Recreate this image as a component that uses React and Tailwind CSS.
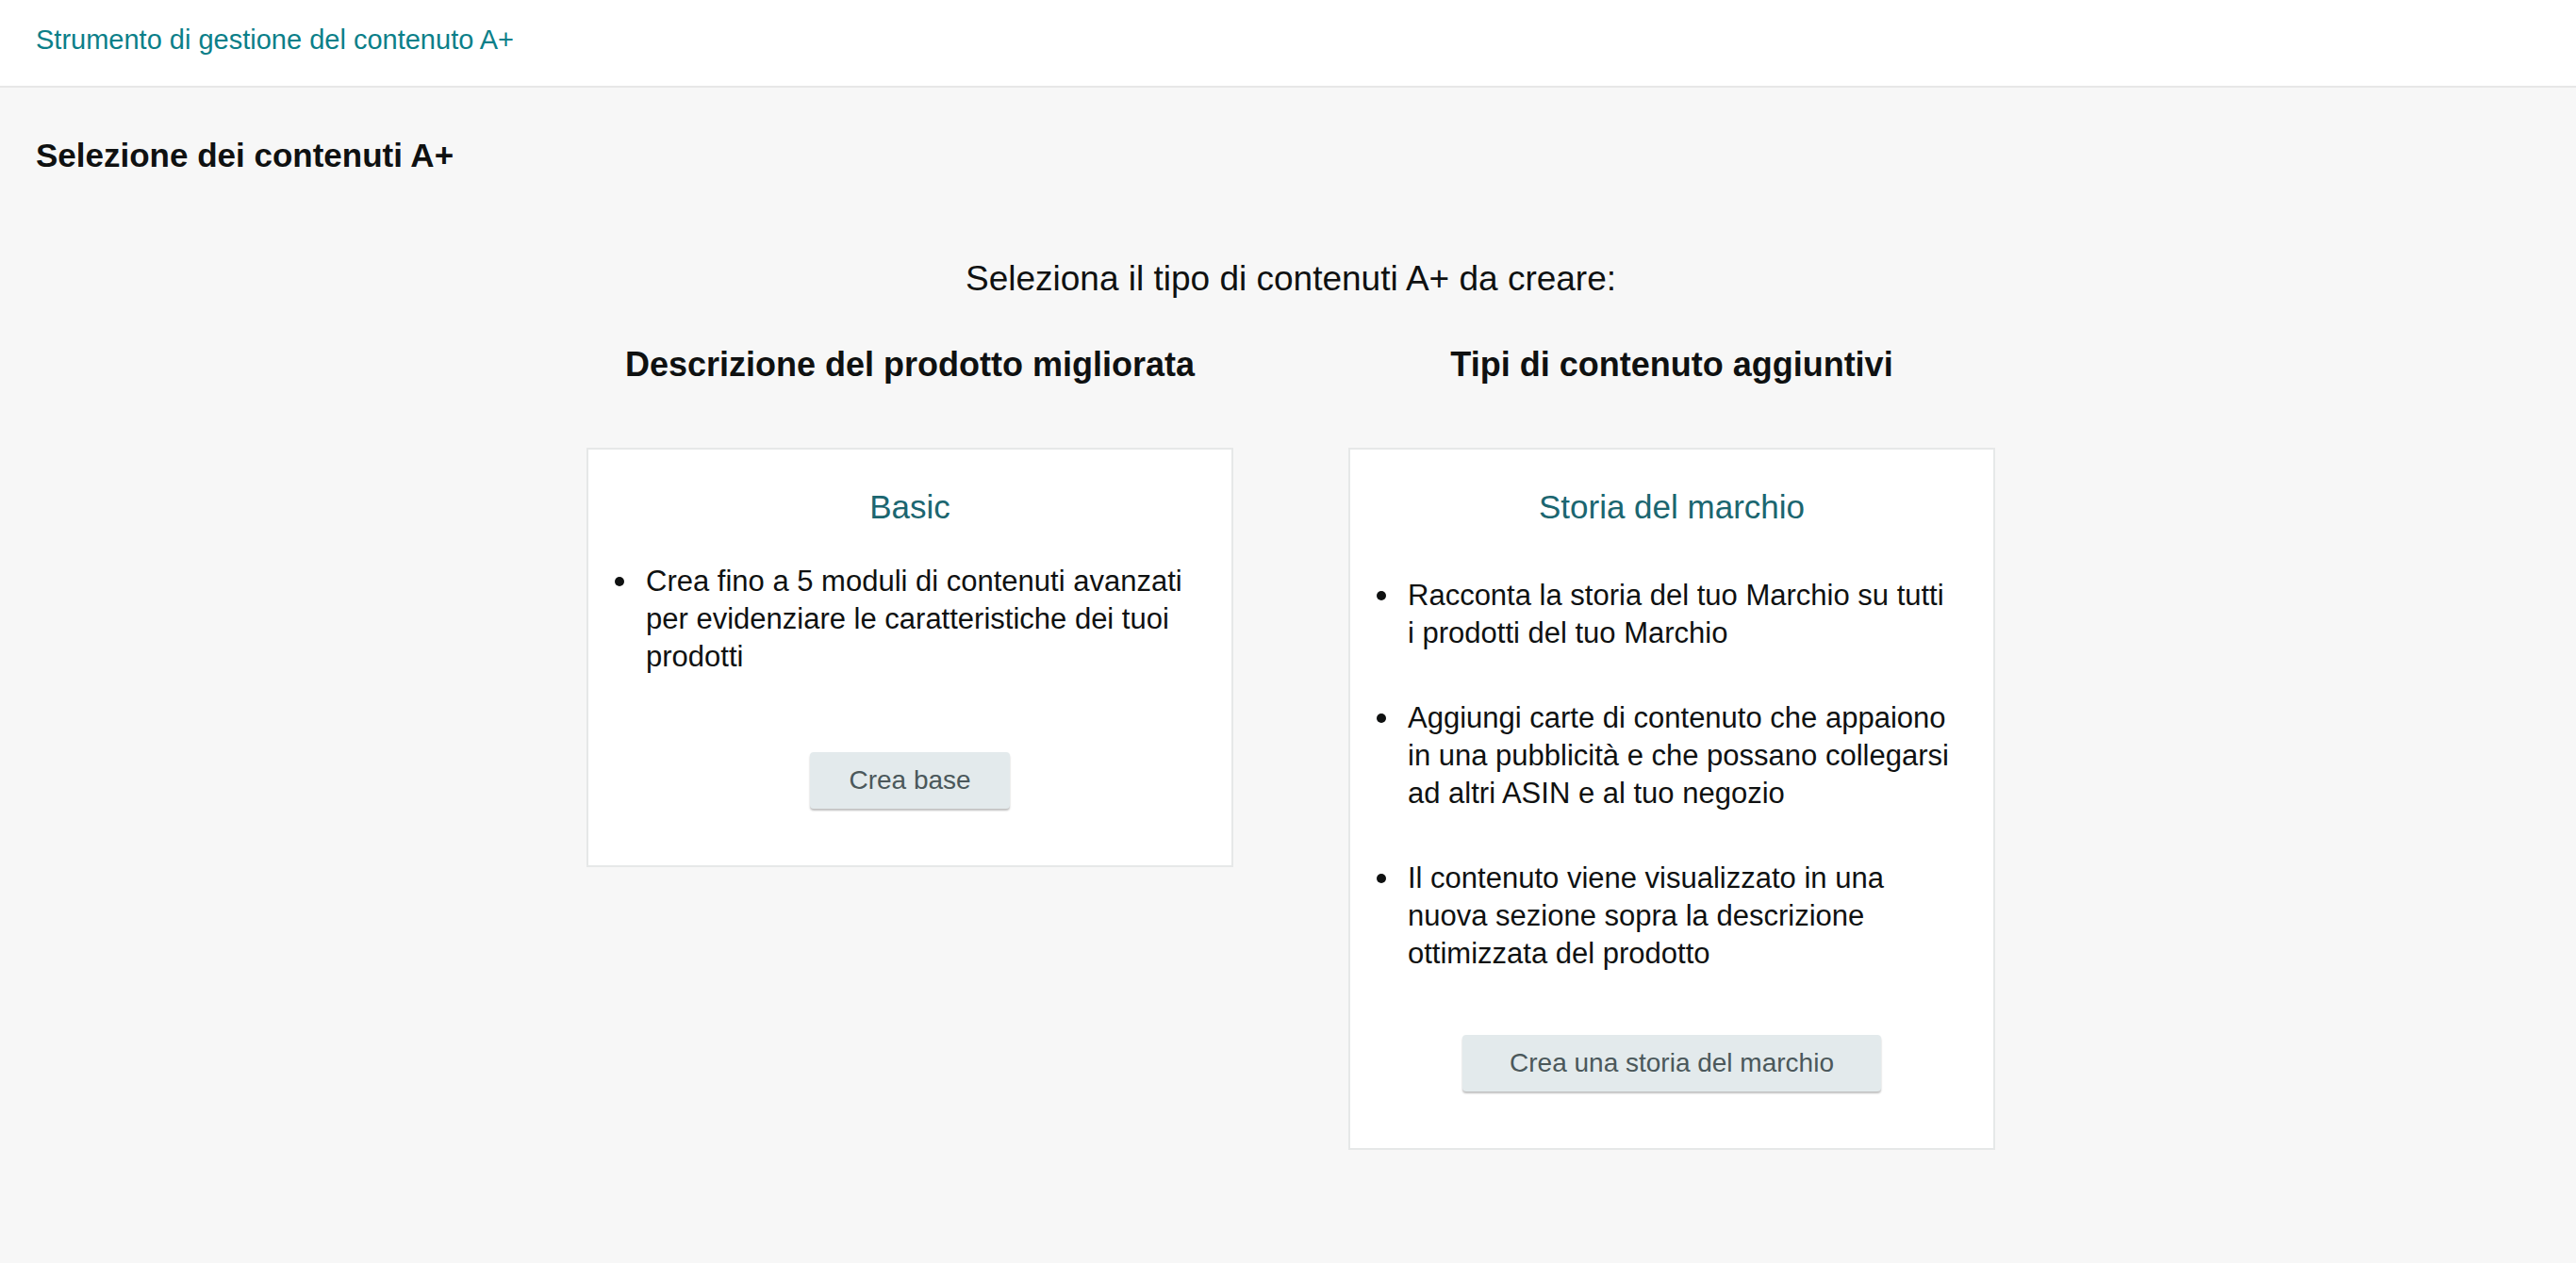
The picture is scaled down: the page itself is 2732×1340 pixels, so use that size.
const cards = [
  {
    heading: "Descrizione del prodotto migliorata",
    title: "Basic",
    items: [
      "Crea fino a 5 moduli di contenuti avanzati per evidenziare le caratteristiche dei tuoi prodotti",
    ],
    listTop: "mt-[39px]",
    buttonTop: "mt-[81px]",
    button: "Crea base",
    buttonWidth: "w-[212px]",
  },
  {
    heading: "Tipi di contenuto aggiuntivi",
    title: "Storia del marchio",
    items: [
      "Racconta la storia del tuo Marchio su tutti i prodotti del tuo Marchio",
      "Aggiungi carte di contenuto che appaiono in una pubblicità e che possano collegarsi ad altri ASIN e al tuo negozio",
      "Il contenuto viene visualizzato in una nuova sezione sopra la descrizione ottimizzata del prodotto",
    ],
    listTop: "mt-[54px]",
    buttonTop: "mt-[66px]",
    button: "Crea una storia del marchio",
    buttonWidth: "w-[444px]",
  },
];

const ContentCard = ({ card }) => (
  <div className="w-[686px] flex flex-col">
    <h2 className="text-center text-[36px] leading-[44px] font-bold text-[#0f1111]">
      {card.heading}
    </h2>
    <div className="mt-[66px] bg-white border-2 border-[#e6e8e8] pt-[41px] pb-[60px] flex flex-col items-center">
      <h3 className="text-[35px] leading-[40px] text-[#1b6670]">{card.title}</h3>
      <ul className={`${card.listTop} self-stretch pl-[28px] pr-[42px] flex flex-col gap-[50px]`}>
        {card.items.map((item) => (
          <li key={item} className="flex items-start">
            <span className="mt-[15px] w-[10px] h-[10px] rounded-full bg-[#0f1111] shrink-0" />
            <span className="ml-[23px] text-[31px] leading-[40px] text-[#0f1111]">{item}</span>
          </li>
        ))}
      </ul>
      <button
        type="button"
        className={`${card.buttonTop} ${card.buttonWidth} h-[60px] rounded-[4px] bg-[#e3eaec] text-[28px] text-[#4b585b] shadow-[0_2px_2px_rgba(0,0,0,0.25)]`}
      >
        {card.button}
      </button>
    </div>
  </div>
);

const App = () => {
  return (
    <div className="min-h-screen bg-[#f7f7f7] font-['Liberation_Sans',Arial,sans-serif] text-[#0f1111]">
      <header className="h-[93px] bg-white border-b-2 border-[#e7e7e7] pl-[38px] pt-[24px]">
        <span className="text-[29px] leading-[36px] text-[#0b7f89]">
          Strumento di gestione del contenuto A+
        </span>
      </header>

      <main className="pt-[50px] pb-[80px]">
        <h1 className="pl-[38px] text-[35px] leading-[44px] font-bold">Selezione dei contenuti A+</h1>

        <p className="mt-[87px] pl-[6px] text-center text-[37px] leading-[44px]">
          Seleziona il tipo di contenuti A+ da creare:
        </p>

        <div className="mt-[47px] pl-[6px] flex justify-center items-start gap-[122px]">
          {cards.map((card) => (
            <ContentCard key={card.title} card={card} />
          ))}
        </div>
      </main>
    </div>
  );
};

export default App;
